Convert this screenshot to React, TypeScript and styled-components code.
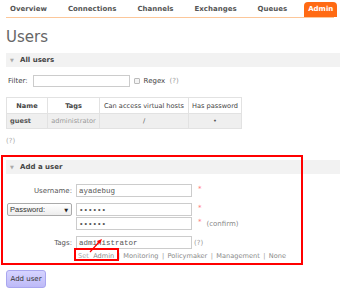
import React from 'react';
import styled, { createGlobalStyle } from 'styled-components';

const GlobalStyle = createGlobalStyle`
  html, body {
    margin: 0;
    padding: 0;
    background: #fff;
  }
  body {
    font-family: "DejaVu Sans", Verdana, sans-serif;
    font-size: 7px;
    color: #444;
  }
`;

const tabs = ['Overview', 'Connections', 'Channels', 'Exchanges', 'Queues', 'Admin'];
const tagLinks = ['Monitoring', 'Policymaker', 'Management', 'None'];

const App = () => {
  return (
    <Page>
      <GlobalStyle />
      <Nav>
        {tabs.map(t => (
          <Tab key={t} $active={t === 'Admin'}>{t}</Tab>
        ))}
      </Nav>

      <Heading>Users</Heading>

      <SectionHeader>
        <Caret>▼</Caret>All users
      </SectionHeader>

      <FilterRow>
        <span>Filter:</span>
        <TextInput $width={97} />
        <CheckBox type="checkbox" />
        <span>Regex <Help>(?)</Help></span>
      </FilterRow>

      <UsersTable>
        <thead>
          <tr>
            <Th $bold $w={40}>Name</Th>
            <Th $bold $w={51}>Tags</Th>
            <Th $w={88}>Can access virtual hosts</Th>
            <Th $w={52}>Has password</Th>
          </tr>
        </thead>
        <tbody>
          <tr>
            <Td $bold $left>guest</Td>
            <Td $muted>administrator</Td>
            <Td>/</Td>
            <Td>•</Td>
          </tr>
        </tbody>
      </UsersTable>

      <HelpLine>(?)</HelpLine>

      <SectionHeader $top={14}>
        <Caret>▼</Caret>Add a user
      </SectionHeader>

      <Form>
        <Label>Username:</Label>
        <FieldCell>
          <MonoInput defaultValue="ayadebug" />
          <Required>*</Required>
        </FieldCell>

        <SelectBox>
          <PlainSelect defaultValue="password">
            <option value="password">Password:</option>
            <option value="hash">Password hash:</option>
          </PlainSelect>
          <SelectArrow>▼</SelectArrow>
        </SelectBox>
        <PasswordStack>
          <FieldCell>
            <MonoInput type="password" defaultValue="123456" />
            <Required>*</Required>
          </FieldCell>
          <FieldCell>
            <MonoInput type="password" defaultValue="123456" />
            <Required>*</Required>
            <Note>(confirm)</Note>
          </FieldCell>
        </PasswordStack>

        <Label>Tags:</Label>
        <FieldCell>
          <MonoInput defaultValue="administrator" />
          <Help>(?)</Help>
        </FieldCell>

        <span />
        <TagLinks>
          <Muted>Set</Muted>
          <TagLink>Admin</TagLink>
          {tagLinks.map(l => (
            <React.Fragment key={l}>
              <Sep>|</Sep>
              <TagLink>{l}</TagLink>
            </React.Fragment>
          ))}
        </TagLinks>
      </Form>

      <AddButton type="button">Add user</AddButton>

      <HighlightBox />
      <SmallHighlight />
      <Arrow width="16" height="16" viewBox="0 0 16 16">
        <line x1="2" y1="14" x2="12" y2="3" stroke="#f00" strokeWidth="1.2" />
        <polygon points="14,1 9,3 12,6" fill="#f00" />
      </Arrow>
    </Page>
  );
};

export default App;

const Page = styled.div`
  position: relative;
  width: 340px;
  height: 295px;
  overflow: hidden;
  padding-left: 6px;
  box-sizing: border-box;
`;

const Nav = styled.div`
  display: flex;
  align-items: flex-end;
  gap: 13px;
  width: 328px;
  height: 17px;
  border-bottom: 1.5px solid #fcc79a;
`;

const Tab = styled.div<{ $active?: boolean }>`
  height: 15px;
  line-height: 15px;
  padding: 0 4px;
  font-weight: bold;
  color: ${p => (p.$active ? '#fff' : '#555')};
  background: ${p => (p.$active ? '#ff6a13' : 'transparent')};
  border-radius: 4px 4px 0 0;
`;

const Heading = styled.h1`
  margin: 10px 0 0;
  height: 18px;
  line-height: 18px;
  font-size: 15px;
  font-weight: normal;
  color: #666;
`;

const SectionHeader = styled.div<{ $top?: number }>`
  margin-top: ${p => p.$top ?? 7}px;
  height: 14px;
  line-height: 14px;
  background: #f2f2f2;
  font-weight: bold;
  color: #444;
  display: flex;
  align-items: center;
`;

const Caret = styled.span`
  font-size: 5px;
  color: #aaa;
  width: 14px;
  padding-left: 4px;
  box-sizing: border-box;
`;

const FilterRow = styled.div`
  margin-top: 8px;
  height: 12px;
  display: flex;
  align-items: center;
  gap: 4px;
  padding-left: 2px;
`;

const TextInput = styled.input<{ $width: number }>`
  width: ${p => p.$width}px;
  height: 12px;
  box-sizing: border-box;
  border: 1px solid #ccc;
  padding: 0;
  margin: 0 0 0 1px;
`;

const CheckBox = styled.input`
  appearance: none;
  width: 6px;
  height: 6px;
  margin: 0;
  border: 1px solid #bbb;
  border-radius: 1px;
  background: #f4f4f4;
`;

const Help = styled.span`
  color: #999;
  margin-left: 2px;
`;

const UsersTable = styled.table`
  margin-top: 10px;
  border-collapse: collapse;
  width: 231px;
  table-layout: fixed;
  font-size: 6.6px;
`;

const Th = styled.th<{ $bold?: boolean; $w: number }>`
  width: ${p => p.$w}px;
  height: 15px;
  padding: 0;
  border: 1px solid #e2e2e2;
  font-weight: ${p => (p.$bold ? 'bold' : 'normal')};
  color: #444;
  text-align: center;
  white-space: nowrap;
`;

const Td = styled.td<{ $bold?: boolean; $left?: boolean; $muted?: boolean }>`
  height: 14px;
  padding: 0 0 0 ${p => (p.$left ? 3 : 0)}px;
  background: #efefef;
  border: 1px solid #e2e2e2;
  text-align: ${p => (p.$left ? 'left' : 'center')};
  font-weight: ${p => (p.$bold ? 'bold' : 'normal')};
  color: ${p => (p.$muted ? '#999' : '#555')};
`;

const HelpLine = styled.div`
  margin-top: 8px;
  height: 9px;
  line-height: 9px;
  color: #aaa;
`;

const Form = styled.div`
  margin-top: 10px;
  display: grid;
  grid-template-columns: 66px auto;
  column-gap: 4px;
  row-gap: 6px;
  align-items: center;
`;

const Label = styled.div`
  text-align: right;
  color: #555;
`;

const FieldCell = styled.div`
  display: flex;
  align-items: center;
  height: 13px;
`;

const MonoInput = styled.input`
  width: 116px;
  height: 13px;
  box-sizing: border-box;
  border: 1px solid #ccc;
  padding: 0 2px;
  margin: 0;
  font-family: "Liberation Mono", "Courier New", monospace;
  font-size: 7.5px;
  color: #555;
`;

const Required = styled.span`
  color: #f77;
  margin-left: 6px;
  align-self: flex-start;
  line-height: 10px;
`;

const Note = styled.span`
  color: #888;
  margin-left: 5px;
`;

const PasswordStack = styled.div`
  display: flex;
  flex-direction: column;
  gap: 1px;
`;

const SelectBox = styled.div`
  align-self: start;
  margin-left: 1px;
  height: 13px;
  box-sizing: border-box;
  border: 1px solid #aaa;
  border-radius: 2px;
  background: linear-gradient(#fff, #ededed);
  display: flex;
  align-items: center;
  padding: 0 3px 0 2px;
`;

const PlainSelect = styled.select`
  appearance: none;
  border: none;
  background: transparent;
  font-family: "Liberation Sans", Arial, sans-serif;
  font-size: 7.5px;
  color: #333;
  padding: 0;
  margin: 0;
  flex: 1;
  outline: none;
`;

const SelectArrow = styled.span`
  font-size: 5px;
  color: #222;
`;

const TagLinks = styled.div`
  margin-top: -3px;
  padding-left: 2px;
  display: flex;
  gap: 3.4px;
  font-size: 6.6px;
  color: #888;
  white-space: nowrap;
`;

const Muted = styled.span`
  color: #aaa;
  margin-right: 1px;
`;

const TagLink = styled.span`
  color: #888;
`;

const Sep = styled.span`
  color: #999;
`;

const AddButton = styled.button`
  margin-top: 10px;
  width: 40px;
  height: 18px;
  padding: 0;
  border: 1px solid #a9a6ef;
  border-radius: 3px;
  background: linear-gradient(#d6d4ff, #bdb9f7);
  font-family: "DejaVu Sans", Verdana, sans-serif;
  font-size: 7px;
  color: #333;
`;

const HighlightBox = styled.div`
  position: absolute;
  left: 1px;
  top: 155px;
  width: 302px;
  height: 110px;
  box-sizing: border-box;
  border: 2px solid #f00;
  pointer-events: none;
`;

const SmallHighlight = styled.div`
  position: absolute;
  left: 74px;
  top: 248px;
  width: 45px;
  height: 13px;
  box-sizing: border-box;
  border: 2px solid #f00;
  pointer-events: none;
`;

const Arrow = styled.svg`
  position: absolute;
  left: 88px;
  top: 238px;
  pointer-events: none;
`;
